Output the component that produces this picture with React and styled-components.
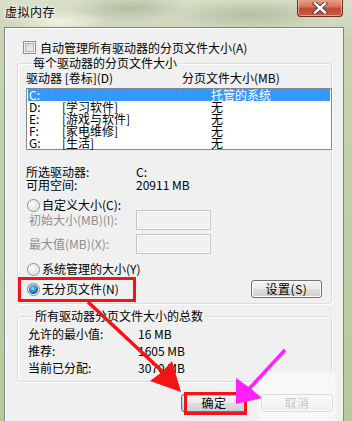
import React from "react";
import styled, { createGlobalStyle } from "styled-components";

const Global = createGlobalStyle`
  html, body { margin: 0; padding: 0; width: 352px; height: 421px; overflow: hidden; }
  body {
    font-family: "Noto Sans CJK SC", "Liberation Sans", sans-serif;
    font-size: 12px;
    color: #000;
  }
  * { box-sizing: border-box; }
`;

const Window = styled.div`
  position: relative;
  width: 352px;
  height: 421px;
  display: flex;
  flex-direction: column;
  overflow: hidden;
  background:
    radial-gradient(ellipse 60px 14px at 130px 8px, rgba(150,165,130,.55), transparent),
    radial-gradient(ellipse 80px 16px at 250px 14px, rgba(120,140,100,.35), transparent),
    radial-gradient(ellipse 50px 12px at 60px 22px, rgba(255,255,240,.7), transparent),
    linear-gradient(180deg, #d9dec9 0%, #c9d3b4 40px, #b7c999 100%);
`;

const TitleBar = styled.div`
  flex: none;
  height: 27px;
  display: flex;
  justify-content: space-between;
  align-items: flex-start;
  padding: 0 9px 0 5px;
`;

const Title = styled.div`
  margin-top: 5px;
  font-size: 12px;
  line-height: 14px;
  letter-spacing: 0.5px;
  text-shadow: 0 0 6px #fff, 0 0 3px #fff;
`;

const CloseButton = styled.div`
  width: 46px;
  height: 18px;
  margin-top: -1px;
  border: 1px solid #6b2a1c;
  border-top: none;
  border-radius: 0 0 4px 4px;
  background: linear-gradient(180deg, #e9a58f 0%, #d7755c 45%, #c24a30 55%, #c65a3e 100%);
  box-shadow: inset 0 0 0 1px rgba(255, 220, 200, .55);
  display: flex;
  align-items: center;
  justify-content: center;
`;

const Client = styled.div`
  flex: 1;
  margin: 0 8px 0 4px;
  border: 1px solid #7d8a84;
  border-bottom: none;
  background: #f0f0f0;
  box-shadow: inset 1px 1px 0 #ffffff;
  padding: 13px 11px 0 12px;
  display: flex;
  flex-direction: column;
`;

const CheckRow = styled.label`
  display: flex;
  align-items: center;
  gap: 4px;
  height: 13px;
  margin-left: 6px;
  line-height: 13px;
`;

const CheckBox = styled.span`
  flex: none;
  width: 13px;
  height: 13px;
  border: 1px solid #8e8f8f;
  background: linear-gradient(135deg, #cbcfd5 0%, #f5f6f7 100%);
  box-shadow: inset 0 0 0 1px #f4f4f4, inset 0 0 0 2px #aeb3b9;
`;

const Group = styled.fieldset`
  margin: ${(p) => p.$mt}px 0 0 0;
  padding: ${(p) => p.$pad};
  border: 1px solid #d5dfe5;
  border-radius: 3px;
  box-shadow: inset 1px 1px 0 #fff, 1px 1px 0 #fff;
  min-width: 0;
`;

const Legend = styled.legend`
  margin-left: 5px;
  padding: 0 2px;
  font-size: 12px;
  line-height: 14px;
`;

const HeaderRow = styled.div`
  display: grid;
  grid-template-columns: 156px 1fr;
  line-height: 12px;
  height: 12px;
  margin: 2px 0 4px 0;
`;

const ListBox = styled.div`
  margin-right: -1px;
  height: 62px;
  border: 1px solid #828790;
  background: #fff;
  padding: 0 1px;
`;

const ListRow = styled.div`
  display: grid;
  grid-template-columns: 33px 149px 1fr;
  height: 12px;
  line-height: 12px;
  padding-left: 1px;
  background: ${(p) => (p.$selected ? "#3399ff" : "transparent")};
  color: ${(p) => (p.$selected ? "#fff" : "#000")};
`;

const InfoGrid = styled.div`
  display: grid;
  grid-template-columns: 110px 1fr;
  row-gap: ${(p) => p.$gap}px;
  line-height: 13px;
  margin: ${(p) => p.$m};
`;

const RadioRow = styled.label`
  display: flex;
  align-items: center;
  gap: 2px;
  height: 14px;
  line-height: 14px;
  margin: ${(p) => p.$mt}px 0 0 1px;
`;

const Radio = styled.span`
  flex: none;
  width: 13px;
  height: 13px;
  border-radius: 50%;
  border: 1px solid #8a8c8f;
  background: ${(p) =>
    p.$checked
      ? "radial-gradient(circle at 45% 40%, #9ee0ff 0%, #2d8ad6 35%, #0b4c8c 62%, #e8e8e8 66%, #fdfdfd 100%)"
      : "radial-gradient(circle at 40% 40%, #ffffff 0%, #e2e4e6 55%, #c4c8cc 100%)"};
  box-shadow: inset 0 0 0 1px #f6f6f6;
`;

const FieldRow = styled.div`
  display: grid;
  grid-template-columns: 107px 75px;
  align-items: center;
  height: 20px;
  margin: ${(p) => p.$mt}px 0 0 3px;
  color: #8d8d8d;
  line-height: 12px;
`;

const TextInput = styled.div`
  width: 75px;
  height: 20px;
  border: 1px solid #c3c3c3;
  border-radius: 1px;
  background: #f0f0f0;
  box-shadow: inset 0 0 0 1px #f8f8f8;
`;

const SplitRow = styled.div`
  display: flex;
  align-items: center;
  justify-content: space-between;
  margin-top: 4px;
  padding-right: 9px;
`;

const Button = styled.div`
  width: ${(p) => p.$w}px;
  height: 18px;
  display: flex;
  align-items: center;
  justify-content: center;
  border: 1px solid ${(p) => (p.$default ? "#3c7fb1" : "#707070")};
  border-radius: 3px;
  background: linear-gradient(180deg, #f2f2f2 0%, #ebebeb 48%, #dddddd 52%, #cfcfcf 100%);
  box-shadow: inset 0 0 0 1px ${(p) => (p.$default ? "#a3d9f5" : "#fbfbfb")};
  line-height: 12px;
  letter-spacing: 0.5px;
`;

const ButtonBar = styled.div`
  display: flex;
  justify-content: flex-end;
  gap: 14px;
  margin-top: 12px;
  margin-right: -1px;
`;

const Overlay = styled.svg`
  position: absolute;
  inset: 0;
  pointer-events: none;
`;

const Watermark = styled.div`
  position: absolute;
  left: 258px;
  top: 372px;
  width: 78px;
  height: 49px;
  background: rgba(250, 250, 250, 0.78);
  filter: blur(1.5px);
  pointer-events: none;
`;

const drives = [
  ["C:", "", "托管的系统"],
  ["D:", "[学习软件]", "无"],
  ["E:", "[游戏与软件]", "无"],
  ["F:", "[家电维修]", "无"],
  ["G:", "[生活]", "无"],
];

export default function App() {
  return (
    <Window>
      <Global />
      <TitleBar>
        <Title>虚拟内存</Title>
        <CloseButton>
          <svg width="16" height="12" viewBox="0 0 16 12">
            <path d="M3 1.5 L13 10.5 M13 1.5 L3 10.5" stroke="#3a3a3a" strokeWidth="4.2" strokeLinecap="square" />
            <path d="M3 1.5 L13 10.5 M13 1.5 L3 10.5" stroke="#ffffff" strokeWidth="2.4" strokeLinecap="square" />
          </svg>
        </CloseButton>
      </TitleBar>
      <Client>
        <CheckRow>
          <CheckBox />
          <span>自动管理所有驱动器的分页文件大小(A)</span>
        </CheckRow>
        <Group $mt={2} $pad="0 0 5px 8px">
          <Legend>每个驱动器的分页文件大小</Legend>
          <HeaderRow>
            <span>驱动器 [卷标](D)</span>
            <span>分页文件大小(MB)</span>
          </HeaderRow>
          <ListBox>
            {drives.map(([d, l, s], i) => (
              <ListRow key={d} $selected={i === 0}>
                <span>{d}</span>
                <span>{l}</span>
                <span>{s}</span>
              </ListRow>
            ))}
          </ListBox>
          <InfoGrid $gap={0} $m="15px 0 0 0">
            <span>所选驱动器:</span>
            <span>C:</span>
            <span>可用空间:</span>
            <span>20911 MB</span>
          </InfoGrid>
          <RadioRow $mt={7}>
            <Radio />
            <span>自定义大小(C):</span>
          </RadioRow>
          <FieldRow $mt={-2}>
            <span>初始大小(MB)(I):</span>
            <TextInput />
          </FieldRow>
          <FieldRow $mt={4}>
            <span>最大值(MB)(X):</span>
            <TextInput />
          </FieldRow>
          <RadioRow $mt={8}>
            <Radio />
            <span>系统管理的大小(Y)</span>
          </RadioRow>
          <SplitRow>
            <RadioRow $mt={0}>
              <Radio $checked />
              <span>无分页文件(N)</span>
            </RadioRow>
            <Button $w={71}>设置(S)</Button>
          </SplitRow>
        </Group>
        <Group $mt={5} $pad="4px 0 7px 10px">
          <Legend>所有驱动器分页文件大小的总数</Legend>
          <InfoGrid $gap={4} $m="0">
            <span>允许的最小值:</span>
            <span>16 MB</span>
            <span>推荐:</span>
            <span>1605 MB</span>
            <span>当前已分配:</span>
            <span>3070 MB</span>
          </InfoGrid>
        </Group>
        <ButtonBar>
          <Button $w={66} $default>确定</Button>
          <Button $w={72}>取消</Button>
        </ButtonBar>
      </Client>
      <Watermark />
      <Overlay width="352" height="421" viewBox="0 0 352 421">
        <rect x="19.5" y="278.5" width="115" height="22" fill="none" stroke="#f41414" strokeWidth="3" />
        <rect x="185.5" y="393.5" width="60" height="20" fill="none" stroke="#f41414" strokeWidth="3" />
        <path d="M88 302 L164 373" stroke="#f41414" strokeWidth="3.5" />
        <path d="M181 392 L150 381 L162 372 L172 361 Z" fill="#f41414" />
        <path d="M285 350 L248 390" stroke="#ff22ff" strokeWidth="3.5" />
        <path d="M236 404 L236 378 L250 388 L262 398 Z" fill="#ff22ff" />
      </Overlay>
    </Window>
  );
}
